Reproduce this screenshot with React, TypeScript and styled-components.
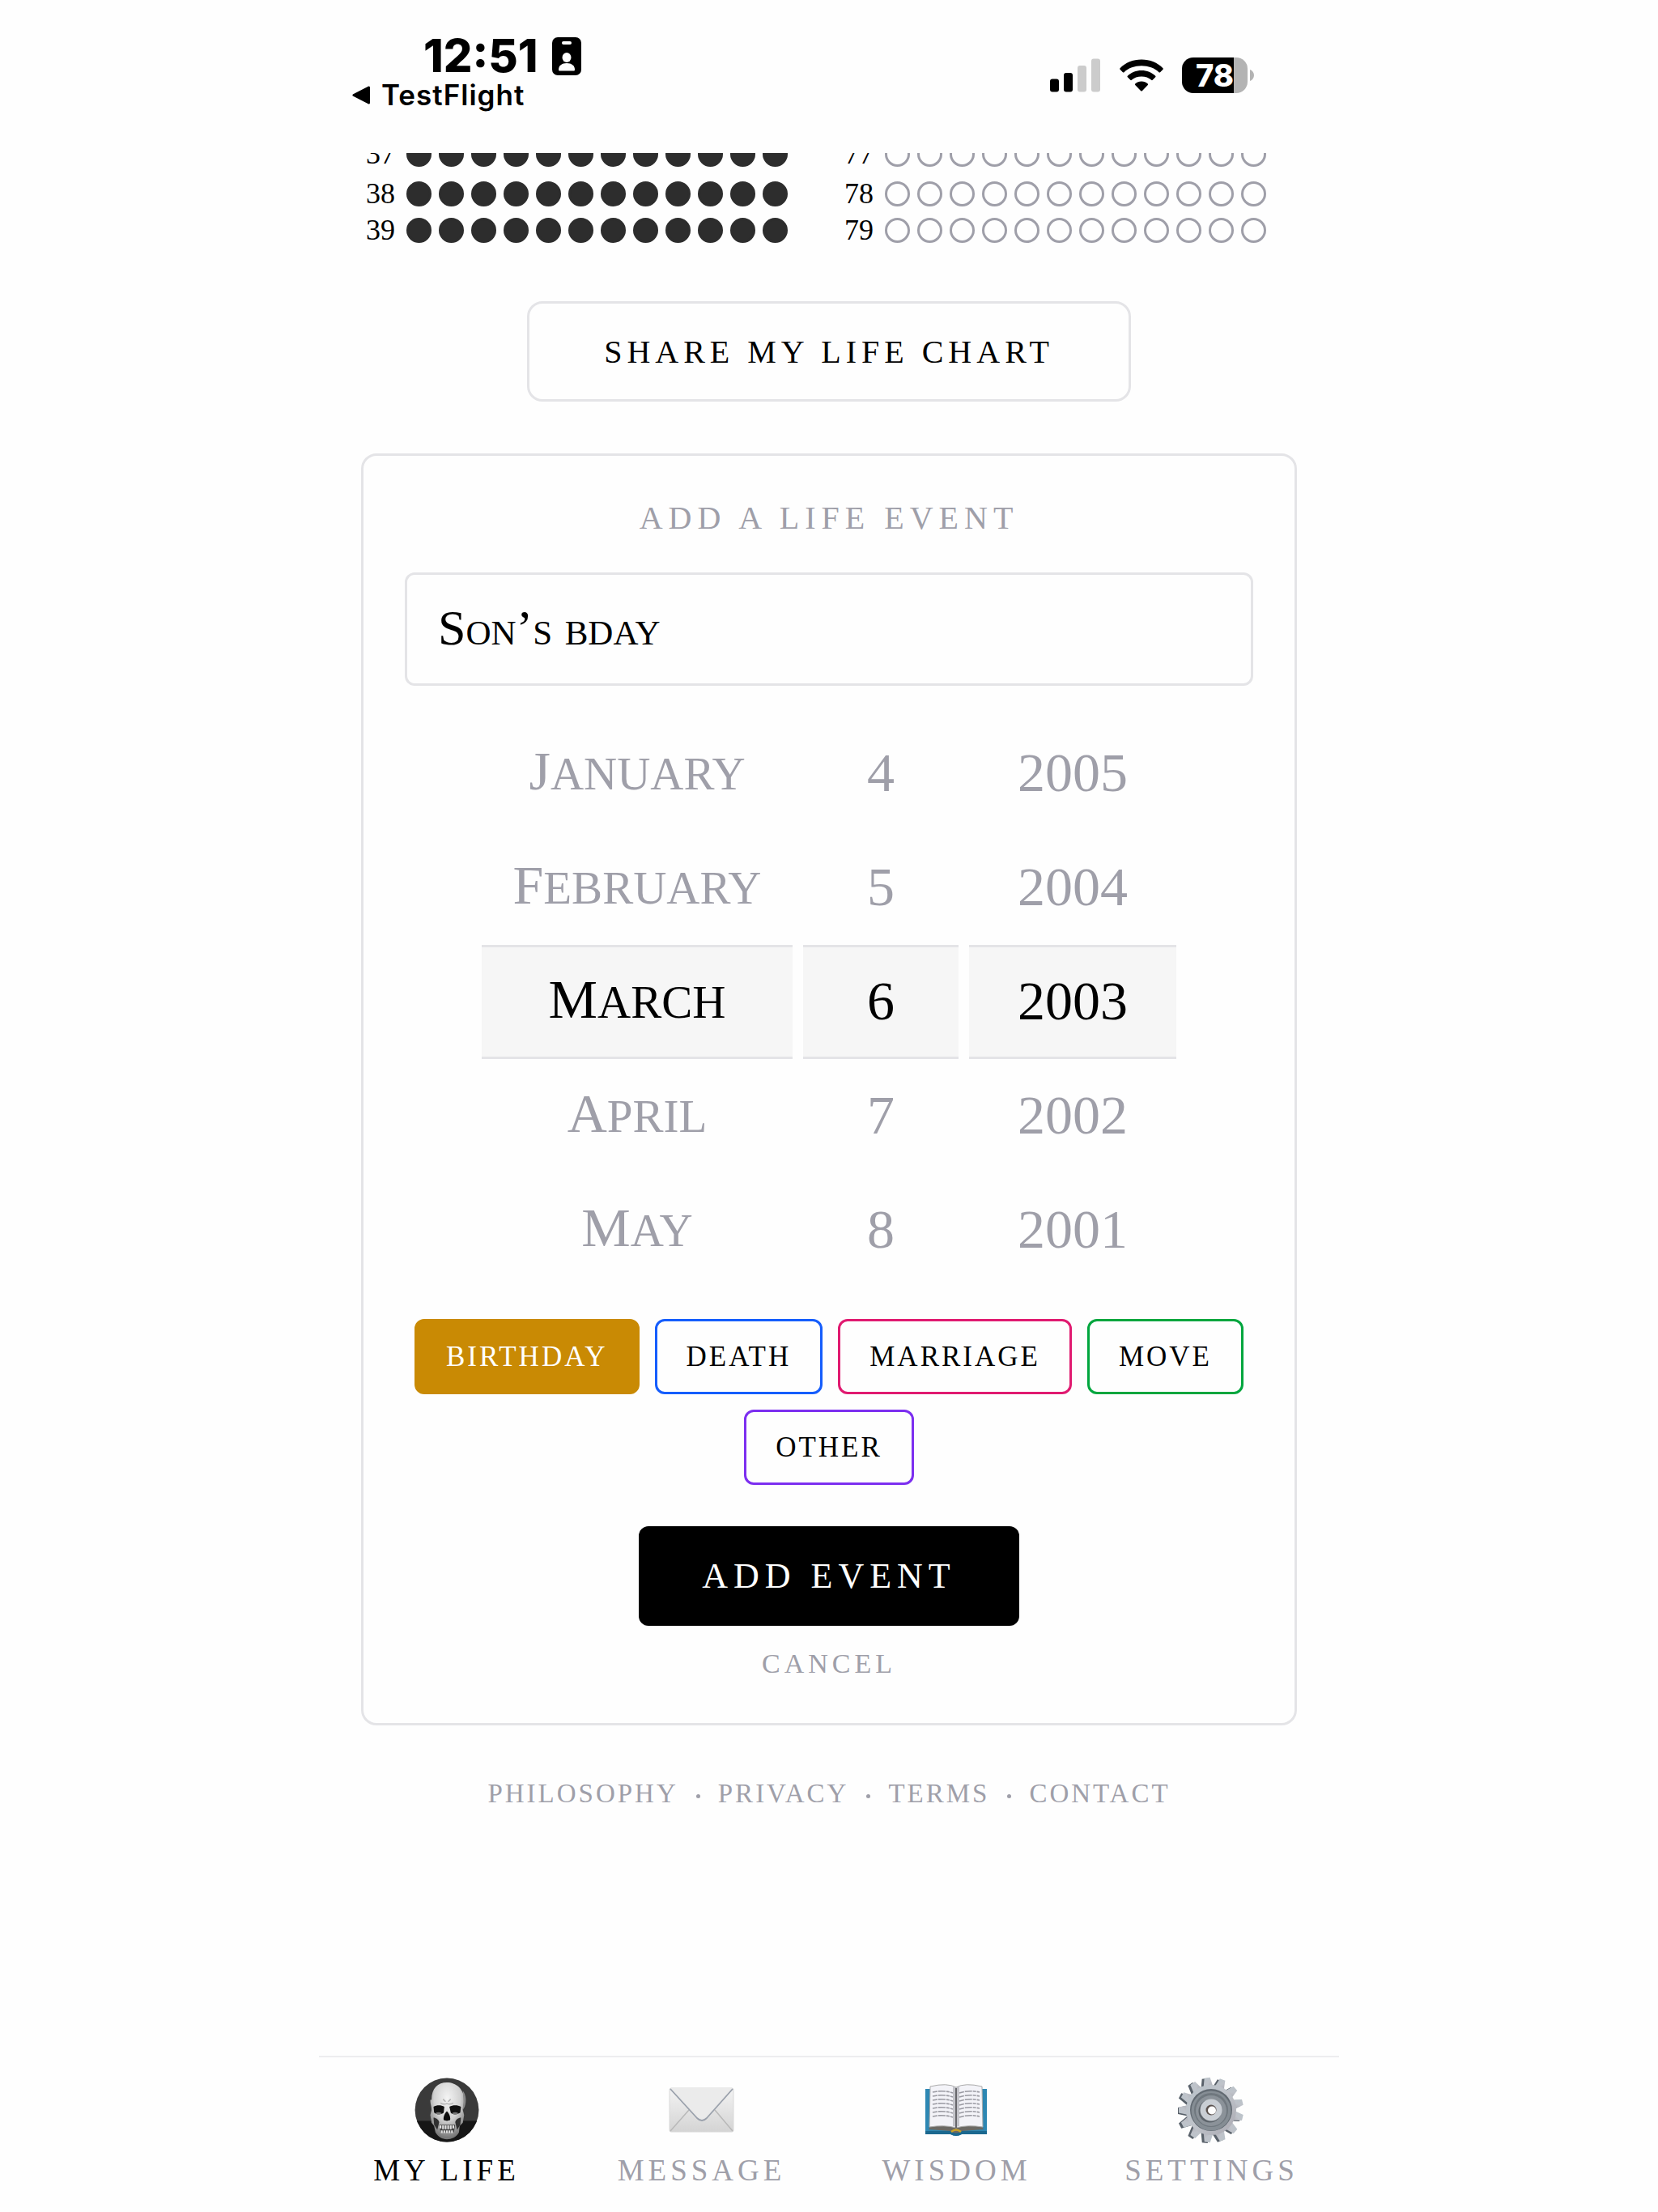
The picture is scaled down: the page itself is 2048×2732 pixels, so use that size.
import React, { useState } from "react";
import styled, { createGlobalStyle } from "styled-components";

const serif = `"Liberation Serif", "Times New Roman", serif`;
const sans = `Inter, "Liberation Sans", sans-serif`;
const muted = "#9f9fa9";
const line = "#e4e4e7";

const GlobalStyle = createGlobalStyle`
  * { box-sizing: border-box; }
  body { margin: 0; background: #fefefe; color: #000; font-family: ${serif}; }
  button, input { font-family: inherit; color: inherit; margin: 0; }
  button { cursor: pointer; }
`;

const Screen = styled.div`
  max-width: 1260px;
  min-height: 100vh;
  margin: 0 auto;
  display: flex;
  flex-direction: column;
`;

/* Status bar */

const StatusBar = styled.header`
  display: flex;
  justify-content: space-between;
  align-items: flex-start;
  padding: 41px 105px 0 41px;
  height: 189px;
  flex: none;
  font-family: ${sans};
`;

const StatusLeft = styled.div`
  display: flex;
  flex-direction: column;
`;

const Clock = styled.div`
  display: flex;
  align-items: center;
  gap: 18px;
  padding-left: 88px;
  font-size: 56px;
  line-height: 56px;
  font-weight: 800;
`;

const BackLink = styled.a`
  display: flex;
  align-items: center;
  gap: 13px;
  color: inherit;
  text-decoration: none;
  font-size: 35px;
  line-height: 40px;
  font-weight: 600;
  letter-spacing: 1px;
`;

const StatusRight = styled.div`
  display: flex;
  align-items: center;
  gap: 23px;
  padding-top: 30px;
`;

const Battery = styled.div`
  display: flex;
  align-items: center;
  gap: 3px;
`;

const BatteryBody = styled.div<{ $level: number }>`
  width: 81px;
  height: 44px;
  border-radius: 14px;
  background: linear-gradient(to right, #000 ${(p) => p.$level}%, #b3b3b3 ${(p) => p.$level}%);
  color: #fff;
  font-size: 38px;
  line-height: 44px;
  font-weight: 800;
  text-align: center;
`;

/* Life chart */

const Main = styled.main`
  padding: 0 52px;
  display: flex;
  flex-direction: column;
  align-items: center;
`;

const Chart = styled.section`
  width: 100%;
  height: 111px;
  overflow: hidden;
  display: grid;
  grid-template-columns: 1fr 1fr;
  align-content: end;
  gap: 26px;
`;

const ChartColumn = styled.div`
  display: flex;
  flex-direction: column;
  gap: 14px;
`;

const YearRow = styled.div<{ $groupEnd: boolean }>`
  display: flex;
  align-items: center;
  gap: 14px;
  height: 31px;
  flex: none;
  margin-bottom: ${(p) => (p.$groupEnd ? 4 : 0)}px;
`;

const YearLabel = styled.span`
  width: 42px;
  text-align: right;
  font-size: 36px;
  line-height: 31px;
`;

const Months = styled.div`
  display: flex;
  gap: 9px;
`;

const Month = styled.span<{ $lived: boolean }>`
  width: 31px;
  height: 31px;
  border-radius: 50%;
  border: 3px solid ${(p) => (p.$lived ? "#2d2d2d" : muted)};
  background: ${(p) => (p.$lived ? "#2d2d2d" : "transparent")};
`;

const ShareButton = styled.button`
  margin-top: 72px;
  height: 124px;
  padding: 0 92px;
  border: 3px solid ${line};
  border-radius: 19px;
  background: none;
  font-size: 40px;
  letter-spacing: 6px;
`;

/* Event form */

const Card = styled.form`
  width: 100%;
  margin-top: 64px;
  padding: 53px 51px;
  border: 3px solid ${line};
  border-radius: 19px;
  display: flex;
  flex-direction: column;
  align-items: center;
`;

const CardTitle = styled.label`
  font-size: 40px;
  line-height: 48px;
  letter-spacing: 7px;
  color: ${muted};
`;

const NameInput = styled.input`
  width: 100%;
  height: 140px;
  margin-top: 43px;
  padding: 0 38px 4px;
  border: 3px solid ${line};
  border-radius: 12px;
  background: none;
  outline: none;
  font-size: 62px;
  font-variant: small-caps;
`;

const Picker = styled.div`
  display: grid;
  grid-template-columns: 384px 192px 256px;
  gap: 13px;
  margin-top: 38px;
`;

const Wheel = styled.div`
  display: flex;
  flex-direction: column;
`;

const WheelItem = styled.button<{ $selected: boolean }>`
  height: 141px;
  padding: 0 0 4px;
  border: 0 solid ${line};
  border-width: ${(p) => (p.$selected ? "3px 0" : "0")};
  background: ${(p) => (p.$selected ? "#f6f6f6" : "none")};
  color: ${(p) => (p.$selected ? "#000" : muted)};
  font-size: 68px;
  line-height: 80px;
`;

const MonthName = styled.span`
  display: block;
  font-size: 57px;
  text-transform: uppercase;
  &::first-letter {
    font-size: 68px;
  }
`;

const Chips = styled.div`
  display: flex;
  flex-wrap: wrap;
  justify-content: center;
  gap: 19px;
  margin-top: 39px;
`;

const Chip = styled.button<{ $color: string; $selected: boolean }>`
  height: 93px;
  padding: 0 36px;
  border: 3px solid ${(p) => p.$color};
  border-radius: 12px;
  background: ${(p) => (p.$selected ? p.$color : "none")};
  color: ${(p) => (p.$selected ? "#fff" : "#000")};
  font-size: 35px;
  letter-spacing: 3px;
`;

const SubmitButton = styled.button`
  margin-top: 51px;
  height: 123px;
  padding: 0 78px;
  border: 0;
  border-radius: 12px;
  background: #000;
  color: #fff;
  font-size: 44px;
  letter-spacing: 7px;
`;

const CancelButton = styled.button`
  margin-top: 27px;
  padding: 0;
  border: 0;
  background: none;
  color: ${muted};
  font-size: 34px;
  line-height: 40px;
  letter-spacing: 5px;
`;

const Footer = styled.footer`
  margin-top: 64px;
  display: flex;
  align-items: center;
  gap: 22px;
`;

const FooterLink = styled.a`
  color: ${muted};
  text-decoration: none;
  font-size: 33px;
  line-height: 40px;
  letter-spacing: 3px;
`;

const FooterDot = styled.span`
  width: 5px;
  height: 5px;
  margin-top: 6px;
  border-radius: 50%;
  background: ${muted};
`;

/* Tab bar */

const TabBar = styled.nav`
  margin-top: auto;
  height: 193px;
  border-top: 2px solid #ededef;
  display: grid;
  grid-template-columns: repeat(4, 1fr);
`;

const Tab = styled.a<{ $active: boolean }>`
  display: flex;
  flex-direction: column;
  align-items: center;
  gap: 12px;
  padding-top: 24px;
  color: ${(p) => (p.$active ? "#000" : muted)};
  text-decoration: none;
  font-size: 37px;
  line-height: 44px;
  letter-spacing: 5px;
`;

const BadgeIcon = () => (
  <svg width="36" height="47" viewBox="0 0 36 47" aria-hidden="true">
    <rect width="36" height="47" rx="7" />
    <rect x="12" y="5" width="12" height="4" rx="2" fill="#fff" />
    <ellipse cx="18" cy="25" rx="5.5" ry="6" fill="#fff" />
    <path d="M8 40c0-5 4-8 10-8s10 3 10 8c0 1-.6 1.600-1.600 1.600H9.600C8.600 41.600 8 41 8 40z" fill="#fff" />
  </svg>
);

const BackIcon = () => (
  <svg width="23" height="23" viewBox="0 0 23 23" aria-hidden="true">
    <path d="M2 11.500L20.500 2v19z" stroke="#000" strokeWidth="3" strokeLinejoin="round" />
  </svg>
);

const SignalIcon = () => (
  <svg width="63" height="42" viewBox="0 0 63 42" aria-hidden="true">
    <rect x="0" y="25.500" width="11" height="16" rx="3" />
    <rect x="17" y="18" width="11" height="23.500" rx="3" />
    <rect x="34" y="9" width="11" height="32.500" rx="3" fill="#ccc" />
    <rect x="51" y="0.500" width="11" height="41" rx="3" fill="#ccc" />
  </svg>
);

const WifiIcon = () => (
  <svg width="54" height="41" viewBox="0 0 54 41" aria-hidden="true">
    <path d="M27 0.500C16.500 0.500 7 4.500 0.500 11.200c-.5.500-.5 1.100 0 1.600l3.400 3.400c.5.500 1.100.5 1.600 0C11 11 18.500 8.300 27 8.300S43 11 48.500 16.200c.5.500 1.100.5 1.600 0l3.400-3.400c.5-.5.500-1.100 0-1.600C47 4.500 37.500.500 27 .500z" />
    <path d="M27 14c-6.800 0-12.800 2.500-17.200 6.700-.5.500-.5 1.100 0 1.600l3.500 3.500c.5.500 1 .5 1.500 0 3.200-2.800 7.400-4.300 12.200-4.300s9 1.500 12.200 4.300c.5.500 1 .5 1.500 0l3.500-3.500c.5-.5.5-1.100 0-1.600C39.800 16.500 33.800 14 27 14z" />
    <path d="M27 27.500c-3 0-5.800 1.100-7.800 2.900-.5.500-.5 1 0 1.500l7 7.300c.5.500 1.100.5 1.600 0l7-7.300c.5-.5.5-1 0-1.500-2-1.800-4.800-2.900-7.800-2.900z" />
  </svg>
);

const BatteryTip = () => (
  <svg width="5" height="14" viewBox="0 0 5 14" aria-hidden="true">
    <path d="M0 0c3 1 5 4 5 7s-2 6-5 7z" fill="#b3b3b3" />
  </svg>
);

const SkullIcon = () => (
  <svg width="82" height="82" viewBox="0 0 104 104" aria-hidden="true">
    <defs>
      <radialGradient id="bone" cx="50%" cy="28%" r="70%">
        <stop offset="0" stopColor="#f4f4f4" />
        <stop offset=".55" stopColor="#d2d2d2" />
        <stop offset="1" stopColor="#777" />
      </radialGradient>
      <clipPath id="disc"><circle cx="52" cy="52" r="50" /></clipPath>
    </defs>
    <g clipPath="url(#disc)">
      <rect width="104" height="104" fill="#3a3a3a" />
      <rect y="69" width="104" height="35" fill="#161616" />
      <path d="M28 36C28 18 38 9 52 9s27 10 27 27c0 7-2 11-2 16l2 8-2 12-5 5-1 10c-4 8-12 11-19 11s-14-4-18-11l-2-10-4-5-2-12 2-8c0-6-2-9-2-16z" fill="url(#bone)" />
      <path d="M77 22c5 6 6 16 3 25l-3 5 1-14z" fill="#8a8a8a" />
      <path d="M31 47c5-3 12-3 17 0l-1 9c-4 4-12 3-15 0zM56 47c5-3 13-3 18 0l-1 9c-4 3-12 4-15 0z" fill="#111" />
      <path d="M34 57c3-2 7-2 10 0-3 3-7 3-10 0zM60 57c3-2 7-2 10 0-3 3-7 3-10 0z" fill="#777" />
      <path d="M52 54c4 4 6 10 5 14l-5 1-5-1c-1-4 1-10 5-14z" fill="#0c0c0c" />
      <path d="M31 64c4 0 8 3 9 7l-3 12-5-8zM74 64c-4 0-8 3-9 7l3 12 5-8z" fill="#303030" />
      <path d="M40 75h25l-2 12H42z" fill="#444" />
      <path d="M42 76v5M46 76v6M50 76v6M54 76v6M58 76v6M62 76v5M44 84v4M48 84v4M52 84v4M56 84v4M60 84v4" stroke="#e0e0e0" strokeWidth="2.800" />
      <path d="M42 41q5 3 10 1 5 2 10-1M46 35l4 4M58 35l-4 4" stroke="#b5b5b5" strokeWidth="2" fill="none" />
    </g>
  </svg>
);

const EnvelopeIcon = () => (
  <svg width="82" height="82" viewBox="0 0 82 82" aria-hidden="true">
    <defs>
      <linearGradient id="paper" x1="0" y1="0" x2="0" y2="1">
        <stop offset="0" stopColor="#f3f3f3" />
        <stop offset="1" stopColor="#d4d4d4" />
      </linearGradient>
    </defs>
    <rect x="1" y="14" width="79" height="54" rx="2" fill="url(#paper)" stroke="#d9d9d9" />
    <path d="M2 67l23-26M79 67L57 41" stroke="#b9b9b9" strokeWidth="1.500" />
    <path d="M2 15l33 36q6 6 12 0l32-36" fill="#e9e9e9" stroke="#9aa1ac" strokeWidth="1.800" />
    <path d="M3 14h75L46 49q-5 5-10 0z" fill="#ebebeb" />
  </svg>
);

const BookIcon = () => (
  <svg width="82" height="82" viewBox="0 0 82 82" aria-hidden="true">
    <path d="M2 15h76v56H47q-7 4-14 0H2z" fill="#2d87b3" />
    <path d="M2 67h76v4H47q-7 4-14 0H2z" fill="#1b688f" />
    <path d="M6 65l3-6h62l3 6-27 2q-7 5-14 0z" fill="#6b6964" />
    <path d="M8 12q21-5 32 1v50q-14-4-33-1z" fill="#f3f3f8" stroke="#aaa" />
    <path d="M72 12q-21-5-32 1v50q14-4 33-1z" fill="#f3f3f8" stroke="#aaa" />
    <path d="M36 12q3 1 4 2 1-1 4-2v49q-3 0-4 2-1-2-4-2z" fill="#c4c4ca" />
    <path d="M40 14v49" stroke="#66666b" strokeWidth="2" />
    {[19, 24, 29, 34, 39, 44, 49].map((y) => (
      <path key={y} d={`M11 ${y}q13-3 25 1M44 ${y + 1}q12-4 25-1`} stroke="#9a9aa2" strokeWidth="1.600" strokeDasharray="6 1 9 1 4 1" fill="none" />
    ))}
    <path d="M34 68q6-5 12 0" stroke="#c9a227" strokeWidth="2.500" fill="none" />
  </svg>
);

const teeth = Array.from({ length: 13 }, (_, i) => (i * 360) / 13 - 7);

const GearIcon = () => (
  <svg width="84" height="82" viewBox="0 0 84 82" aria-hidden="true">
    <defs>
      <linearGradient id="steel" x1="0" y1="0" x2="1" y2="1">
        <stop offset="0" stopColor="#b9c2c9" />
        <stop offset=".5" stopColor="#bfc3ca" />
        <stop offset="1" stopColor="#aaa9b1" />
      </linearGradient>
    </defs>
    <g fill="#59616a" transform="translate(-3 1)">
      {teeth.map((a) => (
        <path key={a} d="M34.500 15L37.500 1h7L47.500 15z" transform={`rotate(${a} 41 41)`} />
      ))}
    </g>
    <g fill="url(#steel)">
      {teeth.map((a) => (
        <path key={a} d="M34.500 15L37.500 1h7L47.500 15z" transform={`rotate(${a} 41 41)`} />
      ))}
      <circle cx="41" cy="41" r="31" />
    </g>
    <circle cx="41" cy="41" r="26" fill="#626a72" />
    <circle cx="41" cy="42" r="24.500" fill="#858d94" />
    <circle cx="41" cy="41" r="21" fill="#6f777e" />
    <circle cx="41" cy="42" r="19" fill="#8b9299" />
    <circle cx="39.500" cy="42.500" r="14" fill="#5d646b" />
    <circle cx="41" cy="41" r="13.500" fill="#c9ced4" />
    <circle cx="41" cy="41" r="6.500" fill="#5c5350" />
    <circle cx="42" cy="41.500" r="5" fill="#fefefe" />
  </svg>
);

const chart = [
  { ages: [37, 38, 39], lived: true },
  { ages: [77, 78, 79], lived: false },
];

const months = ["January", "February", "March", "April", "May"];
const days = ["4", "5", "6", "7", "8"];
const years = ["2005", "2004", "2003", "2002", "2001"];

const kinds = [
  { name: "BIRTHDAY", color: "#c98a04" },
  { name: "DEATH", color: "#155dfc" },
  { name: "MARRIAGE", color: "#e01a70" },
  { name: "MOVE", color: "#00a63e" },
  { name: "OTHER", color: "#7c2ff0" },
];

const links = ["PHILOSOPHY", "PRIVACY", "TERMS", "CONTACT"];

const tabs = [
  { name: "MY LIFE", Icon: SkullIcon },
  { name: "MESSAGE", Icon: EnvelopeIcon },
  { name: "WISDOM", Icon: BookIcon },
  { name: "SETTINGS", Icon: GearIcon },
];

type WheelPickerProps = { label: string; items: string[]; named?: boolean };

function WheelPicker({ label, items, named }: WheelPickerProps) {
  const [value, setValue] = useState(items[2]);
  return (
    <Wheel role="group" aria-label={label}>
      {items.map((item) => (
        <WheelItem
          key={item}
          type="button"
          $selected={item === value}
          aria-pressed={item === value}
          onClick={() => setValue(item)}
        >
          {named ? <MonthName>{item}</MonthName> : item}
        </WheelItem>
      ))}
    </Wheel>
  );
}

export default function App() {
  const [title, setTitle] = useState("Son’s bday");
  const [kind, setKind] = useState("BIRTHDAY");

  return (
    <>
      <GlobalStyle />
      <Screen>
        <StatusBar>
          <StatusLeft>
            <Clock>12:51<BadgeIcon /></Clock>
            <BackLink href="#testflight"><BackIcon />TestFlight</BackLink>
          </StatusLeft>
          <StatusRight>
            <SignalIcon />
            <WifiIcon />
            <Battery>
              <BatteryBody $level={79}>78</BatteryBody>
              <BatteryTip />
            </Battery>
          </StatusRight>
        </StatusBar>

        <Main>
          <Chart aria-label="Life chart">
            {chart.map(({ ages, lived }) => (
              <ChartColumn key={ages[0]}>
                {ages.map((age, i) => (
                  <YearRow key={age} $groupEnd={i === 0}>
                    <YearLabel>{age}</YearLabel>
                    <Months>
                      {Array.from({ length: 12 }, (_, m) => (
                        <Month key={m} $lived={lived} />
                      ))}
                    </Months>
                  </YearRow>
                ))}
              </ChartColumn>
            ))}
          </Chart>

          <ShareButton type="button">SHARE MY LIFE CHART</ShareButton>

          <Card onSubmit={(e) => e.preventDefault()}>
            <CardTitle htmlFor="event-name">ADD A LIFE EVENT</CardTitle>
            <NameInput id="event-name" value={title} onChange={(e) => setTitle(e.target.value)} />
            <Picker>
              <WheelPicker label="Month" items={months} named />
              <WheelPicker label="Day" items={days} />
              <WheelPicker label="Year" items={years} />
            </Picker>
            <Chips>
              {kinds.map(({ name, color }) => (
                <Chip
                  key={name}
                  type="button"
                  $color={color}
                  $selected={name === kind}
                  aria-pressed={name === kind}
                  onClick={() => setKind(name)}
                >
                  {name}
                </Chip>
              ))}
            </Chips>
            <SubmitButton type="submit">ADD EVENT</SubmitButton>
            <CancelButton type="button">CANCEL</CancelButton>
          </Card>

          <Footer>
            {links.map((name, i) => (
              <React.Fragment key={name}>
                {i > 0 && <FooterDot />}
                <FooterLink href={`#${name.toLowerCase()}`}>{name}</FooterLink>
              </React.Fragment>
            ))}
          </Footer>
        </Main>

        <TabBar>
          {tabs.map(({ name, Icon }, i) => (
            <Tab key={name} href={`#${name.toLowerCase().replace(" ", "-")}`} $active={i === 0}>
              <Icon />
              {name}
            </Tab>
          ))}
        </TabBar>
      </Screen>
    </>
  );
}
